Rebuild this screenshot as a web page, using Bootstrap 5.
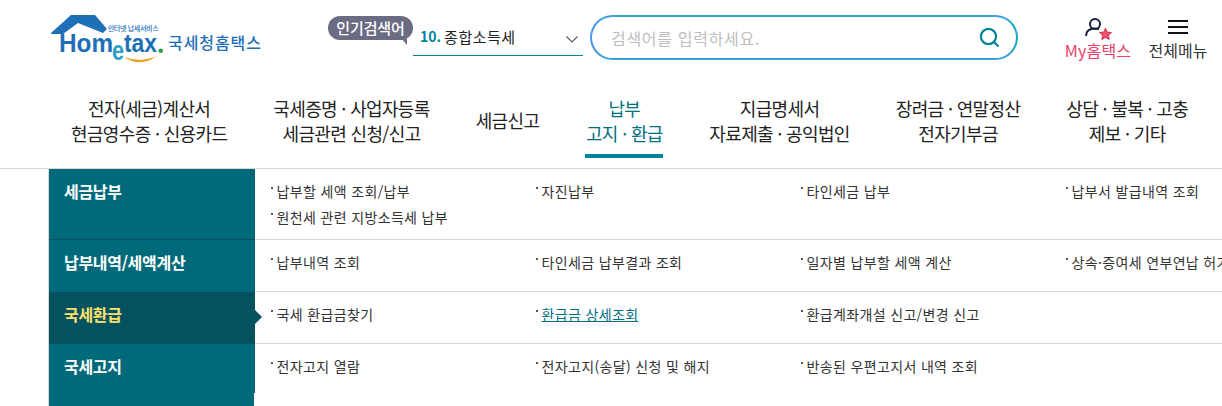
<!DOCTYPE html>
<html lang="ko">
<head>
  <meta charset="UTF-8">
  <title>국세청 홈택스</title>
  <link href="https://cdn.jsdelivr.net/npm/bootstrap@5.3.3/dist/css/bootstrap.min.css" rel="stylesheet">
  <style>
    html, body {
      height: 406px;
      overflow: hidden;
    }
    body {
      width: 1222px;
      background-color: #fff;
      color: #222;
      font-family: "Noto Sans CJK KR", "Noto Sans", sans-serif;
    }
    .top-bar {
      height: 80px;
      padding-left: 50px;
    }
    .logo-box {
      width: 278px;
      height: 80px;
      flex: none;
    }
    .hot-label {
      position: relative;
      flex: none;
      width: 85px;
      height: 24px;
      margin-top: 16px;
      background-color: #6b6b84;
      border-radius: 12px;
      color: #fff;
      font-size: 15px;
      font-weight: 500;
      line-height: 23px;
      text-align: center;
      letter-spacing: -.15px;
    }
    .hot-label::after {
      content: "";
      position: absolute;
      right: 6px;
      bottom: -5px;
      border-top: 6px solid #6b6b84;
      border-left: 5px solid transparent;
    }
    .hot-select {
      flex: none;
      width: 170px;
      height: 41px;
      margin-top: 15px;
      margin-right: 7px;
      padding: 0 5px 0 7px;
      border-bottom: 1px solid #00849b;
      font-size: 14px;
      color: #222;
    }
    .hot-select b {
      color: #00849b;
      margin-right: 3px;
    }
    .hot-select span {
      font-size: 15px;
      letter-spacing: .5px;
      line-height: 20px;
    }
    .search-box {
      flex: none;
      width: 428px;
      height: 45px;
      margin-top: 15px;
      padding: 0 16px 0 19px;
      border-radius: 23px;
      border: 2px solid #18aabd;
      border-left-color: #4b96ea;
      border-top-color: #3ea0d8;
      border-bottom-color: #3ea0d8;
      color: #bdbdbd;
      font-size: 16px;
      letter-spacing: .7px;
    }
    .util-link {
      flex: none;
      text-align: center;
      font-size: 16px;
      line-height: 20px;
    }
    .util-my {
      width: 68px;
      margin-left: 46px;
      color: #ee3d68;
      letter-spacing: .2px;
    }
    .util-all {
      width: 60px;
      margin-left: 16px;
      color: #333;
    }
    .util-icon {
      height: 22px;
      margin-top: 18px;
    }
    .main-nav {
      height: 89px;
      padding-left: 71px;
      gap: 46px;
      border-bottom: 1px solid #d9d9d9;
    }
    .main-nav a {
      flex: none;
      height: 78px;
      padding-top: 16px;
      color: #222;
      font-size: 18px;
      line-height: 25px;
      letter-spacing: -.65px;
      text-align: center;
      text-decoration: none;
      white-space: nowrap;
    }
    .main-nav a.single {
      padding-top: 28px;
    }
    .main-nav a.on {
      width: 78px;
      color: #00707f;
      border-bottom: 4px solid #00849b;
    }
    .menu-wrap {
      margin-left: 48px;
      width: 1174px;
      border-left: 1px solid #d9d9d9;
    }
    .menu-row {
      border-bottom: 1px solid #d9d9d9;
    }
    .menu-side {
      flex: none;
      width: 206px;
      margin-bottom: -1px;
      padding: 11px 0 0 15px;
      background-color: #006a7a;
      color: #fff;
      font-size: 16px;
      font-weight: 700;
      line-height: 22px;
      letter-spacing: -.3px;
    }
    .menu-side.first {
      border-bottom: 1px solid #04515f;
    }
    .menu-side.current {
      position: relative;
      background-color: #04515f;
      color: #ffe26e;
    }
    .menu-side.current::after {
      content: "";
      position: absolute;
      top: 18px;
      right: -7px;
      border-left: 7px solid #04515f;
      border-top: 7px solid transparent;
      border-bottom: 7px solid transparent;
    }
    .menu-links {
      display: grid;
      grid-template-columns: repeat(4, 265px);
      align-content: start;
      flex: 1 1 0;
      min-width: 0;
      overflow: hidden;
      padding: 9px 0 0 15px;
      font-size: 14px;
      line-height: 26px;
      letter-spacing: .35px;
      white-space: nowrap;
    }
    .menu-links a {
      position: relative;
      padding-left: 6.5px;
      color: #333;
      text-decoration: none;
    }
    .menu-links a::before {
      content: "";
      position: absolute;
      left: 1px;
      top: 9px;
      width: 2px;
      height: 2px;
      background-color: #555;
    }
    .menu-links a.picked {
      color: #00707f;
    }
    .menu-links a.picked span {
      text-decoration: underline;
    }
    .h-first { height: 71px; }
    .h-mid { height: 52px; }
    .h-last { height: 62px; border-bottom: 0; }
    .h-last .menu-side {
      margin-bottom: 0;
      background: linear-gradient(#006a7a 49px, transparent 49px), linear-gradient(90deg, #006a7a 205px, #fff 205px);
    }
  </style>
</head>
<body>
  <div class="top-bar d-flex align-items-start">
    <div class="logo-box">
      <svg width="278" height="80" viewBox="0 0 278 80">
        <path d="M1 33 L21 15 H45 L57 29 L53 33 L28 23 L13 34 H1Z" fill="#1d6fb8"/>
        <text x="9" y="52" font-family="Liberation Sans, sans-serif" font-size="26" font-weight="700" fill="#1d6fb8" textLength="54" lengthAdjust="spacingAndGlyphs">Hom</text>
        <text x="62" y="60" font-family="Liberation Sans, sans-serif" font-size="28" font-weight="700" fill="#2b9fc9" textLength="12" lengthAdjust="spacingAndGlyphs">e</text>
        <text x="74" y="52" font-family="Liberation Sans, sans-serif" font-size="26" font-weight="700" fill="#1d6fb8" textLength="33" lengthAdjust="spacingAndGlyphs">tax</text>
        <circle cx="110.700" cy="50.700" r="2.300" fill="#2e9e3f"/>
        <path d="M74 57 Q90 68 107 56 Q90 63 74 57Z" fill="#f0a020"/>
        <text x="57.700" y="31" font-family="Noto Sans CJK KR, sans-serif" font-size="7" font-weight="500" fill="#1d6fb8" textLength="51">인터넷 납세서비스</text>
        <text x="118" y="49" font-family="Noto Sans CJK KR, sans-serif" font-size="16" font-weight="500" fill="#1d6fb8" textLength="93">국세청홈택스</text>
      </svg>
    </div>
    <div class="hot-label">인기검색어</div>
    <div class="hot-select d-flex align-items-end pb-2">
      <b>10.</b><span class="flex-grow-1">종합소득세</span>
      <svg width="12" height="7" viewBox="0 0 12 7" class="mb-1"><path d="M.5.5l5.500 5.500 5.500-5.500" fill="none" stroke="#555" stroke-width="1.1"/></svg>
    </div>
    <div class="search-box d-flex align-items-center justify-content-between">
      <span>검색어를 입력하세요.</span>
      <svg width="21" height="21" viewBox="0 0 21 21"><circle cx="9.5" cy="9.5" r="7.6" fill="none" stroke="#00849b" stroke-width="2.2"/><path d="M15 15l4.500 4.500" stroke="#00849b" stroke-width="2.2"/></svg>
    </div>
    <div class="util-link util-my">
      <div class="util-icon">
        <svg class="d-block mx-auto" width="28" height="22" viewBox="0 0 28 22"><circle cx="11" cy="6" r="5" fill="none" stroke="#1a2340" stroke-width="2"/><path d="M2 18c0-5 3.500-7.500 9-7.500 1.500 0 3 .3 4 1" fill="none" stroke="#1a2340" stroke-width="2"/><path d="M21.500 10.500l1.700 3.700 4 .45-3 2.650.85 3.900-3.550-2-3.550 2 .85-3.900-3-2.650 4-.45z" fill="#f0546f" stroke="#d83a58" stroke-width="1.200" stroke-linejoin="round"/></svg>
      </div>
      <div>My홈택스</div>
    </div>
    <div class="util-link util-all">
      <div class="util-icon">
        <svg class="d-block mx-auto" width="20" height="16" viewBox="0 0 20 16"><path d="M0 3h20M0 9h20M0 15h20" stroke="#111" stroke-width="2"/></svg>
      </div>
      <div>전체메뉴</div>
    </div>
  </div>

  <nav class="main-nav d-flex align-items-start">
    <a href="#">전자(세금)계산서<br>현금영수증 · 신용카드</a>
    <a href="#">국세증명 · 사업자등록<br>세금관련 신청/신고</a>
    <a href="#" class="single">세금신고</a>
    <a href="#" class="on">납부<br>고지 · 환급</a>
    <a href="#">지급명세서<br>자료제출 · 공익법인</a>
    <a href="#">장려금 · 연말정산<br>전자기부금</a>
    <a href="#">상담 · 불복 · 고충<br>제보 · 기타</a>
  </nav>

  <div class="menu-wrap">
    <div class="menu-row h-first d-flex">
      <div class="menu-side first">세금납부</div>
      <div class="menu-links">
        <a href="#">납부할 세액 조회/납부</a>
        <a href="#">자진납부</a>
        <a href="#">타인세금 납부</a>
        <a href="#">납부서 발급내역 조회</a>
        <a href="#">원천세 관련 지방소득세 납부</a>
      </div>
    </div>
    <div class="menu-row h-mid d-flex">
      <div class="menu-side">납부내역/세액계산</div>
      <div class="menu-links">
        <a href="#">납부내역 조회</a>
        <a href="#">타인세금 납부결과 조회</a>
        <a href="#">일자별 납부할 세액 계산</a>
        <a href="#">상속·증여세 연부연납 허가</a>
      </div>
    </div>
    <div class="menu-row h-mid d-flex">
      <div class="menu-side current">국세환급</div>
      <div class="menu-links">
        <a href="#">국세 환급금찾기</a>
        <a href="#" class="picked"><span>환급금 상세조회</span></a>
        <a href="#">환급계좌개설 신고/변경 신고</a>
      </div>
    </div>
    <div class="menu-row h-last d-flex">
      <div class="menu-side">국세고지</div>
      <div class="menu-links">
        <a href="#">전자고지 열람</a>
        <a href="#">전자고지(송달) 신청 및 해지</a>
        <a href="#">반송된 우편고지서 내역 조회</a>
      </div>
    </div>
  </div>

  <script src="https://cdn.jsdelivr.net/npm/bootstrap@5.3.3/dist/js/bootstrap.bundle.min.js"></script>
</body>
</html>
